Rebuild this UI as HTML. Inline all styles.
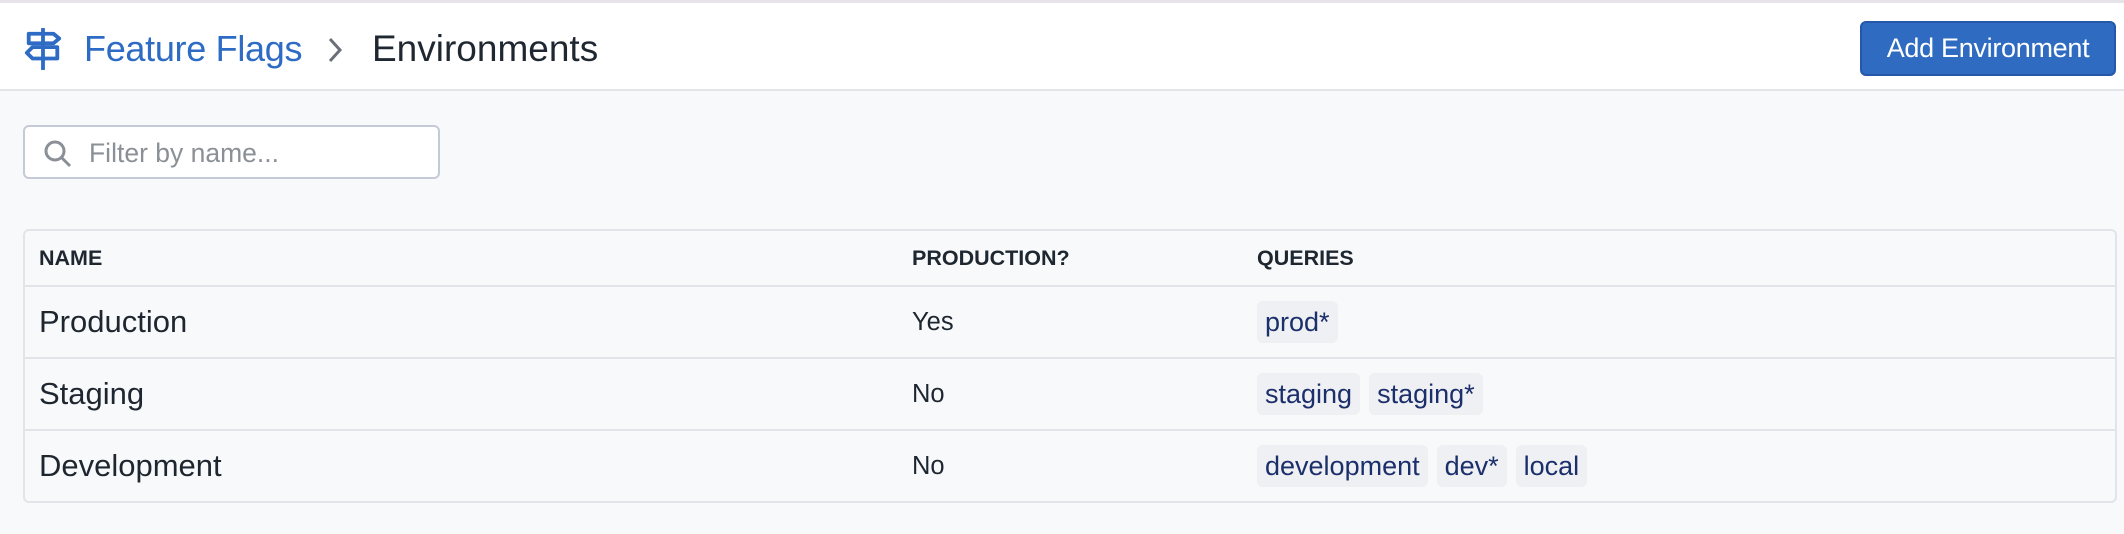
<!DOCTYPE html>
<html><head><meta charset="utf-8"><style>
*{box-sizing:border-box;margin:0;padding:0}
body{width:2124px;height:534px;background:#f8f9fb;font-family:"Liberation Sans",sans-serif;color:#1e2630;position:relative;overflow:hidden}
.top{position:absolute;left:0;top:0;width:2124px;height:91px;background:#fff;border-top:3px solid #e6e4ea;border-bottom:2px solid #e4e5ea}
.ico{position:absolute;left:23px;top:23px}
.bc1{position:absolute;left:84px;top:25px;font-size:36px;color:#2d6bc4;letter-spacing:-0.3px}
.chev{position:absolute;left:326px;top:32px}
.bc2{position:absolute;left:372px;top:25px;font-size:37px;color:#1f2730;letter-spacing:0px}
.btn{position:absolute;left:1860px;top:18px;width:256px;height:55px;background:#2f6bc0;border:2px solid #2557ab;border-radius:6px;color:#fff;font-size:27px;text-align:center;line-height:51px;letter-spacing:-0.3px}
.inp{position:absolute;left:23px;top:125px;width:417px;height:54px;background:#fff;border:2px solid #c5cad8;border-radius:6px}
.inp svg{position:absolute;left:18px;top:12px}
.inp span{position:absolute;left:64px;top:11px;font-size:26.5px;color:#8b9097}
.tbl{position:absolute;left:23px;top:229px;width:2094px;height:274px;border:2px solid #e2e4e9;border-radius:6px}
.row{position:absolute;left:0;width:2090px;border-top:2px solid #e2e4e9}
.h{position:absolute;font-size:21.5px;font-weight:bold;top:15px}
.c{position:absolute;font-size:31px}
.p{position:absolute;font-size:25.5px}
.tag{display:inline-block;background:#eff0f3;color:#1b2f6b;font-size:27px;padding:0 8px;height:42px;line-height:42px;border-radius:6px;margin-right:9px}
.tags{position:absolute;left:1232px}
</style></head><body>
<div class="top">
<svg class="ico" width="40" height="46" viewBox="0 0 42 48" fill="none" stroke="#2d6bc4" stroke-width="4" stroke-linejoin="round"><path d="M21 2v44"/><path d="M6 8h26l6 5-6 5H6z"/><path d="M36 22H10l-6 6 6 6h26z"/></svg>
<div class="bc1">Feature Flags</div>
<svg class="chev" width="20" height="30" viewBox="0 0 20 30" fill="none" stroke="#6b7078" stroke-width="3"><path d="M4 4l10 11-10 11"/></svg>
<div class="bc2">Environments</div>
<div class="btn">Add Environment</div>
</div>
<div class="inp"><svg width="30" height="30" viewBox="0 0 30 30" fill="none" stroke="#8b9097" stroke-width="3"><circle cx="12" cy="12" r="9"/><path d="M19 19l8 8"/></svg><span>Filter by name...</span></div>
<div class="tbl">
<div class="h" style="left:14px">NAME</div>
<div class="h" style="left:887px">PRODUCTION?</div>
<div class="h" style="left:1232px">QUERIES</div>
<div class="row" style="top:54px;height:72px"><div class="c" style="left:14px;top:17px">Production</div><div class="p" style="left:887px;top:21px">Yes</div><div class="tags" style="top:14px"><span class="tag">prod*</span></div></div>
<div class="row" style="top:126px;height:72px"><div class="c" style="left:14px;top:17px">Staging</div><div class="p" style="left:887px;top:21px">No</div><div class="tags" style="top:14px"><span class="tag">staging</span><span class="tag">staging*</span></div></div>
<div class="row" style="top:198px;height:72px"><div class="c" style="left:14px;top:17px">Development</div><div class="p" style="left:887px;top:21px">No</div><div class="tags" style="top:14px"><span class="tag">development</span><span class="tag">dev*</span><span class="tag">local</span></div></div>
</div>
</body></html>
